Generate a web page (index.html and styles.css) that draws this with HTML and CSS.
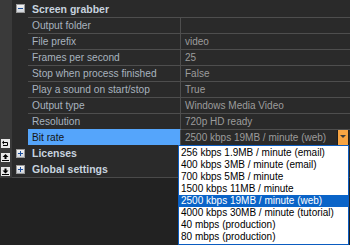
FILE: index.html
```html
<!DOCTYPE html>
<html>
<head>
<meta charset="utf-8">
<link rel="stylesheet" href="styles.css">
</head>
<body>
<div class="wrap">
  <div class="side">
    <svg class="tool" width="9" height="9" viewBox="0 0 9 9"><rect x="0" y="0" width="9" height="9" fill="#e8e8e8"/><path d="M2 3.5h4.5v3H2" fill="none" stroke="#000" stroke-width="1"/><path d="M1 3.5l2-2v4z" fill="#000"/></svg>
    <svg class="tool" width="9" height="9" viewBox="0 0 9 9"><rect x="0" y="0" width="9" height="9" fill="#e8e8e8"/><path d="M4.5 1l3 3h-2v2h-2v-2h-2z" fill="#000"/><path d="M1 7.5h7" stroke="#000" stroke-width="1"/></svg>
    <svg class="tool" width="9" height="9" viewBox="0 0 9 9"><rect x="0" y="0" width="9" height="9" fill="#e8e8e8"/><path d="M4.5 6.5l3-3h-2v-2h-2v2h-2z" fill="#000"/><path d="M1 7.5h7" stroke="#000" stroke-width="1"/></svg>
  </div>
  <div class="grid">
    <div class="cat first">
      <span class="box"><span class="minus"></span></span>
      <span class="cat-name">Screen grabber</span>
    </div>
    <div class="row"><div class="label">Output folder</div><div class="value"></div></div>
    <div class="row"><div class="label">File prefix</div><div class="value">video</div></div>
    <div class="row"><div class="label">Frames per second</div><div class="value">25</div></div>
    <div class="row"><div class="label">Stop when process finished</div><div class="value">False</div></div>
    <div class="row"><div class="label">Play a sound on start/stop</div><div class="value">True</div></div>
    <div class="row"><div class="label">Output type</div><div class="value">Windows Media Video</div></div>
    <div class="row"><div class="label">Resolution</div><div class="value">720p HD ready</div></div>
    <div class="row sel"><div class="label">Bit rate</div><div class="value"><span class="vtext">2500 kbps 19MB / minute (web)</span><span class="drop-btn"><span class="arrow"></span></span></div></div>
    <div class="cat">
      <span class="box"><span class="minus"></span><span class="vbar"></span></span>
      <span class="cat-name">Licenses</span>
    </div>
    <div class="cat last">
      <span class="box"><span class="minus"></span><span class="vbar"></span></span>
      <span class="cat-name">Global settings</span>
    </div>
  </div>
</div>
<ul class="list">
  <li>256 kbps 1.9MB / minute (email)</li>
  <li>400 kbps 3MB / minute (email)</li>
  <li>700 kbps 5MB / minute</li>
  <li>1500 kbps 11MB / minute</li>
  <li class="on">2500 kbps 19MB / minute (web)</li>
  <li>4000 kbps 30MB / minute (tutorial)</li>
  <li>40 mbps (production)</li>
  <li>80 mbps (production)</li>
</ul>
</body>
</html>
```
FILE: styles.css
```css
html, body {
  margin: 0;
  padding: 0;
}
body {
  background: #222222;
  width: 350px;
  height: 245px;
  overflow: hidden;
  position: relative;
  font-family: "Liberation Sans", Arial, sans-serif;
  font-size: 10px;
}
.wrap {
  display: flex;
  height: 178px;
}
.side {
  width: 12px;
  background: #3a3a3a;
  display: flex;
  flex-direction: column;
  align-items: flex-start;
  justify-content: flex-end;
  padding: 0 0 2px 1px;
  box-sizing: border-box;
  gap: 5px;
}
.tool {
  display: block;
}
.grid {
  flex: 1;
  background: #2a2a2a;
  border-bottom: 1px solid #4a4a4a;
  height: 177px;
}
.cat {
  display: flex;
  align-items: center;
  height: 16px;
  padding-left: 4px;
  gap: 7px;
}
.cat.first {
  height: 17px;
}
.box {
  width: 7px;
  height: 7px;
  border: 1px solid #9a9a9a;
  background: linear-gradient(#f4f4f4, #cfd3da);
  position: relative;
  flex: none;
}
.minus {
  position: absolute;
  left: 1px;
  top: 3px;
  width: 5px;
  height: 1px;
  background: #1d4f9c;
}
.vbar {
  position: absolute;
  left: 3px;
  top: 1px;
  width: 1px;
  height: 5px;
  background: #1d4f9c;
}
.cat-name {
  color: #c7d3df;
  font-weight: bold;
  font-size: 10.5px;
}
.row {
  display: flex;
  margin-left: 16px;
  height: 16px;
}
.label, .value {
  border-top: 1px solid #4e4e4e;
  height: 15px;
  line-height: 15px;
  white-space: nowrap;
}
.label {
  width: 148px;
  padding-left: 4px;
  border-right: 1px solid #4e4e4e;
  color: #a8b3bf;
  font-size: 10.2px;
}
.value {
  flex: 1;
  padding-left: 4px;
  color: #9c9c9c;
  display: flex;
  align-items: center;
}
.sel .label {
  background: #55a5fb;
  border-top-color: #55a5fb;
  color: #141414;
}
.vtext {
  flex: 1;
}
.drop-btn {
  height: 15px;
  background: #f6a443;
  border-left: 1px solid #1e1e1e;
  border-right: 1px solid #1e1e1e;
  display: flex;
  justify-content: center;
  padding-top: 5px;
  box-sizing: border-box;
  width: 12px;
  margin-right: 1px;
}
.arrow {
  width: 0;
  height: 0;
  border-left: 3px solid transparent;
  border-right: 3px solid transparent;
  border-top: 3px solid #3a3a3a;
}
.list {
  position: absolute;
  left: 178px;
  top: 145px;
  width: 169px;
  margin: 0;
  padding: 1px 0;
  list-style: none;
  background: #ffffff;
  border: 1px solid #0b5cc0;
}
.list li {
  height: 12px;
  line-height: 12px;
  padding-left: 2px;
  color: #000000;
  white-space: nowrap;
}
.list li.on {
  background: #0a64c8;
  color: #ffffff;
}
```
